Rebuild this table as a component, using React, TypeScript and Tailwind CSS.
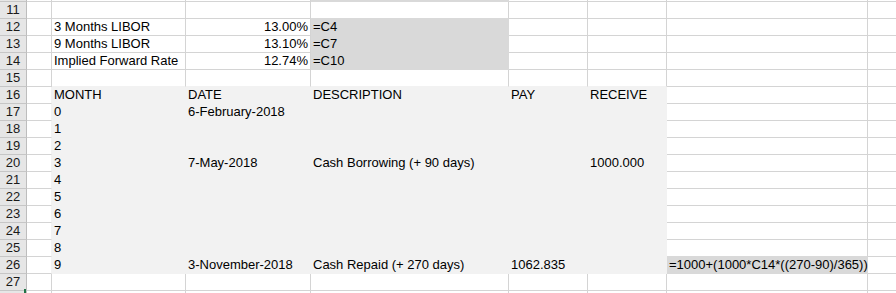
import React from 'react';

// column widths include the 1px right gridline: row header, A..H
const COLS = [27, 25, 134, 125, 198, 79, 79, 201, 29];

type Cell = { text: string; align?: 'right' };

const ROWS: { n: number; label?: boolean; cells: Record<number, Cell> }[] = [
  { n: 11, cells: {} },
  { n: 12, cells: { 2: { text: '3 Months LIBOR' }, 3: { text: '13.00%', align: 'right' }, 4: { text: '=C4' } } },
  { n: 13, cells: { 2: { text: '9 Months LIBOR' }, 3: { text: '13.10%', align: 'right' }, 4: { text: '=C7' } } },
  { n: 14, cells: { 2: { text: 'Implied Forward Rate' }, 3: { text: '12.74%', align: 'right' }, 4: { text: '=C10' } } },
  { n: 15, cells: {} },
  { n: 16, cells: { 2: { text: 'MONTH' }, 3: { text: 'DATE' }, 4: { text: 'DESCRIPTION' }, 5: { text: 'PAY' }, 6: { text: 'RECEIVE' } } },
  { n: 17, cells: { 2: { text: '0' }, 3: { text: '6-February-2018' } } },
  { n: 18, cells: { 2: { text: '1' } } },
  { n: 19, cells: { 2: { text: '2' } } },
  { n: 20, cells: { 2: { text: '3' }, 3: { text: '7-May-2018' }, 4: { text: 'Cash Borrowing (+ 90 days)' }, 6: { text: '1000.000' } } },
  { n: 21, cells: { 2: { text: '4' } } },
  { n: 22, cells: { 2: { text: '5' } } },
  { n: 23, cells: { 2: { text: '6' } } },
  { n: 24, cells: { 2: { text: '7' } } },
  { n: 25, cells: { 2: { text: '8' } } },
  {
    n: 26,
    cells: {
      2: { text: '9' },
      3: { text: '3-November-2018' },
      4: { text: 'Cash Repaid (+ 270 days)' },
      5: { text: '1062.835' },
      7: { text: '=1000+(1000*C14*((270-90)/365))' },
    },
  },
  { n: 27, cells: {} },
  // only the top edge of row 28 is in view
  { n: 28, label: false, cells: {} },
];

const GRID = '#d4d4d4';
const DARK = '#d9d9d9';
const LIGHT = '#f2f2f2';

function fillOf(r: number, c: number): string | null {
  if (c === 4 && (r === 10 || (r >= 12 && r <= 14))) return DARK;
  if (c === 7 && r === 26) return DARK;
  if (r >= 16 && r <= 26 && c >= 2 && c <= 6) return LIGHT;
  return null;
}

function borderColors(r: number, c: number) {
  const own = fillOf(r, c);
  const right = own ?? (c === 1 && fillOf(r, 2) === LIGHT ? LIGHT : GRID);
  const below = fillOf(r + 1, c);
  const bottom = own ?? (below && r !== 10 ? below : GRID);
  return { right, bottom };
}

function HeaderCell({ n, h }: { n?: number; h: string }) {
  return (
    <div
      className={`${h} box-border bg-[#e6e6e6] border-r border-b border-r-[#bdbdbd] border-b-[#c6c6c6] text-center text-[13px] leading-[16px] text-[#1a1a1a] overflow-hidden`}
    >
      {n}
    </div>
  );
}

function GridCell({ r, c, cell, h }: { r: number; c: number; cell?: Cell; h: string }) {
  const fill = fillOf(r, c) ?? '#ffffff';
  const { right, bottom } = borderColors(r, c);
  return (
    <div
      className={`${h} box-border border-r border-b whitespace-nowrap overflow-visible text-[13px] leading-[16px] text-black ${
        cell?.align === 'right' ? 'text-right pr-[2px]' : 'pl-[2px]'
      }`}
      style={{ backgroundColor: fill, borderRightColor: right, borderBottomColor: bottom }}
    >
      {cell?.text}
    </div>
  );
}

export default function App() {
  return (
    <div className="relative w-[896px] h-[293px] overflow-hidden bg-white font-['Liberation_Sans',Arial,sans-serif]">
      <div className="grid grid-cols-[27px_25px_134px_125px_198px_79px_79px_201px_29px] w-[897px]">
        {/* partial row 10 */}
        <HeaderCell h="h-[2px]" />
        {COLS.slice(1).map((_, i) => (
          <GridCell key={`r10-${i}`} r={10} c={i + 1} h="h-[2px]" />
        ))}

        {ROWS.map((row) => (
          <React.Fragment key={row.n}>
            <HeaderCell n={row.label === false ? undefined : row.n} h="h-[17px]" />
            {COLS.slice(1).map((_, i) => (
              <GridCell key={`${row.n}-${i}`} r={row.n} c={i + 1} cell={row.cells[i + 1]} h="h-[17px]" />
            ))}
          </React.Fragment>
        ))}
      </div>

      {/* selection handle peeking at the bottom edge */}
      <div className="absolute left-[24px] top-[289px] w-[2px] h-[4px] bg-[#217346]" />
    </div>
  );
}
